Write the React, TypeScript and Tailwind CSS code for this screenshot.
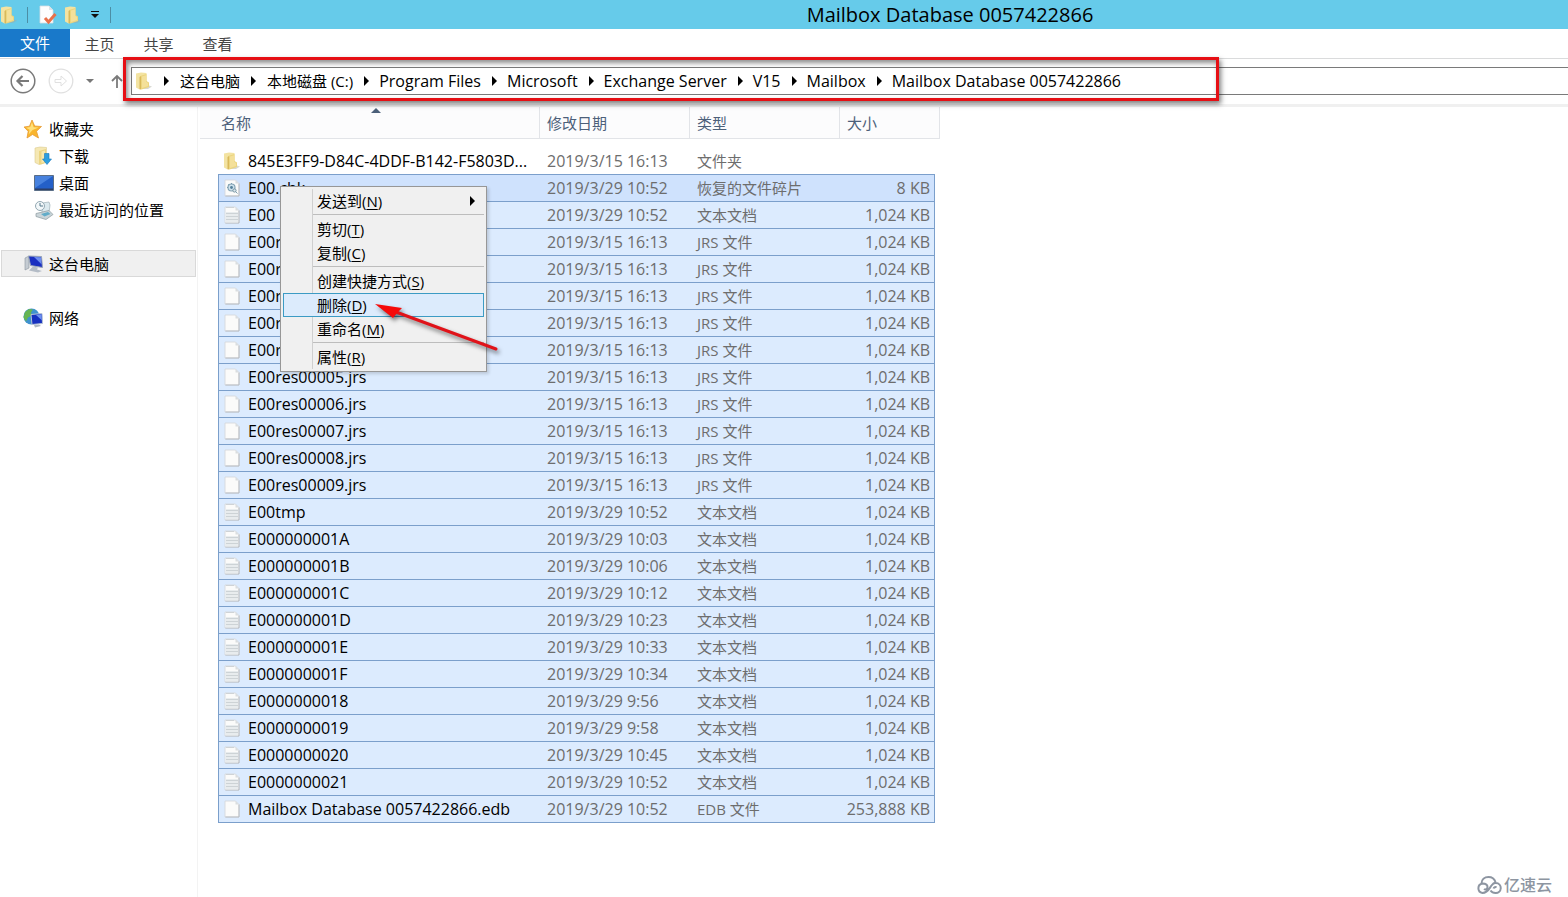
import { useState } from 'react'

type FileKind = 'folder' | 'chk' | 'text' | 'blank'

interface FileEntry {
  name: string
  date: string
  type: string
  size: string
  kind: FileKind
}

const DRIVES = ['这台电脑', '本地磁盘 (C:)']

const FOLDERS = [
  'Program Files',
  'Microsoft',
  'Exchange Server',
  'V15',
  'Mailbox',
  'Mailbox Database 0057422866',
]

const jrs = (name: string): FileEntry => ({
  name,
  date: '2019/3/15 16:13',
  type: 'JRS 文件',
  size: '1,024 KB',
  kind: 'blank',
})

const log = (name: string, time: string): FileEntry => ({
  name,
  date: `2019/3/29 ${time}`,
  type: '文本文档',
  size: '1,024 KB',
  kind: 'text',
})

const FILES: FileEntry[] = [
  { name: '845E3FF9-D84C-4DDF-B142-F5803D...', date: '2019/3/15 16:13', type: '文件夹', size: '', kind: 'folder' },
  { name: 'E00.chk', date: '2019/3/29 10:52', type: '恢复的文件碎片', size: '8 KB', kind: 'chk' },
  log('E00', '10:52'),
  jrs('E00res00000.jrs'),
  jrs('E00res00001.jrs'),
  jrs('E00res00002.jrs'),
  jrs('E00res00003.jrs'),
  jrs('E00res00004.jrs'),
  jrs('E00res00005.jrs'),
  jrs('E00res00006.jrs'),
  jrs('E00res00007.jrs'),
  jrs('E00res00008.jrs'),
  jrs('E00res00009.jrs'),
  log('E00tmp', '10:52'),
  log('E000000001A', '10:03'),
  log('E000000001B', '10:06'),
  log('E000000001C', '10:12'),
  log('E000000001D', '10:23'),
  log('E000000001E', '10:33'),
  log('E000000001F', '10:34'),
  log('E0000000018', '9:56'),
  log('E0000000019', '9:58'),
  log('E0000000020', '10:45'),
  log('E0000000021', '10:52'),
  { name: 'Mailbox Database 0057422866.edb', date: '2019/3/29 10:52', type: 'EDB 文件', size: '253,888 KB', kind: 'blank' },
]

const MENU = [
  [{ label: '发送到', hotkey: 'N', submenu: true }],
  [
    { label: '剪切', hotkey: 'T' },
    { label: '复制', hotkey: 'C' },
  ],
  [
    { label: '创建快捷方式', hotkey: 'S' },
    { label: '删除', hotkey: 'D' },
    { label: '重命名', hotkey: 'M' },
  ],
  [{ label: '属性', hotkey: 'R' }],
]

function FolderIcon() {
  return (
    <svg viewBox="0 0 18 18" className="size-[18px] shrink-0">
      <path d="M11 12.500l6 2-4 2.500H4z" fill="#a9a99c" opacity=".45" />
      <path d="M1 1.500L6 .5l5.500.5v14L4.500 17.500 1 15.500z" fill="#f3e3a2" />
      <path d="M5 4l6.500-2v7l2.500 1.500v4.500l-7.500 2.500-1.500-.5z" fill="#ecd57f" />
      <path d="M4.500 5l1.500-.7v13.200L4.500 17z" fill="#d9b95b" />
      <path d="M7 4.500l4-1.300v6.500l2 1.300v3L7 16z" fill="#f4e09a" />
    </svg>
  )
}

function FileIcon({ kind }: { kind: FileKind }) {
  if (kind === 'folder') return <FolderIcon />
  return (
    <svg viewBox="0 0 18 18" className="size-[18px] shrink-0">
      <path d="M2 1h10.500l3.500 3.500V17H2z" fill="#fbfbfa" stroke="#d3d6d9" strokeWidth=".8" />
      <path d="M16 4.500V17H2.500" fill="none" stroke="#b4b9be" strokeWidth=".9" />
      <path d="M12.500 1v3.500H16z" fill="#d9dde0" />
      {kind === 'text' && (
        <g>
          <path d="M2.500 6h12.500v10.500H2.500z" fill="#e8ecee" />
          <path d="M3.500 1.500h8" stroke="#b5babf" strokeDasharray="1 1" />
          <path d="M3 7.500h12M3 10.500h12M3 13.500h12" stroke="#cdd3d6" />
        </g>
      )}
      {kind === 'chk' && (
        <g fill="none">
          <circle cx="8.500" cy="8.500" r="3.500" fill="#cfe2ec" stroke="#86a5b6" strokeWidth="1.200" />
          <circle cx="8.500" cy="8.500" r="1.400" fill="#55809a" />
          <circle cx="11.500" cy="11.500" r="1.600" fill="#dce8ed" stroke="#7895a3" />
          <path d="M4 8.500h1M8.500 4v1M5.300 5.300l.8.8M12.500 12.500l2 2" stroke="#7c9eb0" />
        </g>
      )}
    </svg>
  )
}

function StarIcon() {
  return (
    <svg viewBox="0 0 20 20" className="size-5 shrink-0">
      <path d="M9 1l2.700 6 6.800.5-5 4.800 2 6.700L9.500 15.500 4 19l1.200-6.700L1 8l5.500-.8z" fill="#f9b52d" stroke="#e79b35" strokeWidth=".8" />
      <path d="M9 3l1.600 5.200 5 .4-6 2.400-4 4.500 1-4.700L3 8.700l4.200-.8z" fill="#ffe07a" />
    </svg>
  )
}

function DownloadIcon() {
  return (
    <svg viewBox="0 0 20 20" className="size-5 shrink-0">
      <path d="M1 2l5-1 6.500.5V16L5 18.500 1 16.500z" fill="#f5e8b4" stroke="#dccb8e" strokeWidth=".6" />
      <path d="M5 5l7-2v6l2 1v6l-7 2.500H5z" fill="#ecd583" />
      <path d="M7.500 5.500L11 4.500V16l-3.500 1z" fill="#f7e9b0" />
      <path d="M10.500 7.500h4.500v5.500h2.500L13 18.500 8.500 13h2z" fill="#2d9fe0" stroke="#1679bd" strokeWidth=".6" />
    </svg>
  )
}

function DesktopIcon() {
  return (
    <svg viewBox="0 0 20 20" className="size-5 shrink-0">
      <path d="M.5 2.500h19v15H.5z" fill="#2460c8" stroke="#5b6e86" />
      <path d="M1 3h18L1 15z" fill="#5c95ea" opacity=".65" />
      <path d="M1 15.500h18V17H1z" fill="#2c3f66" />
    </svg>
  )
}

function RecentIcon() {
  return (
    <svg viewBox="0 0 20 20" className="size-5 shrink-0">
      <path d="M8 3l7-1 1 3-1 8H8z" fill="#dbe9ee" stroke="#a0b0b8" strokeWidth=".7" />
      <path d="M2 13.500l13-3 4 4-7 5-10-3z" fill="#cbd5d9" stroke="#8b999f" strokeWidth=".7" />
      <path d="M7 14l7-2 2.500 2-6 2.500z" fill="#62acc8" />
      <circle cx="6" cy="6" r="4.500" fill="#f2f7f9" stroke="#93a8b2" />
      <path d="M6 3v3h3" fill="none" stroke="#55788a" />
    </svg>
  )
}

function ComputerIcon() {
  return (
    <svg viewBox="0 0 20 20" className="size-5 shrink-0">
      <path d="M1 4l4-2v12l-4 2z" fill="#c4cbd2" stroke="#89939f" strokeWidth=".6" />
      <path d="M4.500 2l13 .5 1 11-12-2z" fill="#1a2fc0" stroke="#9aa6b8" />
      <path d="M10 3l7 .3.5 7z" fill="#6d8ef0" />
      <path d="M9 12.500l5 1-1 2 5 1.500-4 1.500-9-2z" fill="#b4bcc6" />
    </svg>
  )
}

function NetworkIcon() {
  return (
    <svg viewBox="0 0 20 20" className="size-5 shrink-0">
      <circle cx="8.500" cy="8.500" r="8" fill="#3f92cf" />
      <path d="M2 4l4-3 4 .5-2 3 1 3-4 2-2 4-2.500-4z" fill="#66b553" />
      <path d="M8 6.500l11-1 .5 10-10.500 1z" fill="#1630c0" stroke="#b7c4d4" />
      <path d="M13 7l5.500-.7.3 6z" fill="#6e91f0" />
      <path d="M11 17l5-.5 2 1.500-6 1.500z" fill="#aeb8c3" />
    </svg>
  )
}

function RightTriangle() {
  return (
    <svg viewBox="0 0 5 10" className="h-[10px] w-[5px] shrink-0">
      <path d="M0 0l5 5-5 5z" fill="#000" />
    </svg>
  )
}

function TitleBar() {
  return (
    <header className="flex h-[29px] items-center bg-[#66cbea]">
      <FolderIcon />
      <span className="ml-[9px] h-4 w-px bg-[#4c8ea5]" />
      <button type="button" aria-label="属性" className="ml-[10px]">
        <svg viewBox="0 0 20 20" className="size-5">
          <path d="M2 1h9l4 4v13H2z" fill="#fdfdfd" stroke="#d7dde2" strokeWidth=".8" />
          <path d="M11 1v4h4" fill="#dde3e8" />
          <path d="M7 13l3.500 4 7-8" fill="none" stroke="#e8704a" strokeWidth="3" />
        </svg>
      </button>
      <button type="button" aria-label="新建文件夹" className="ml-[6px]">
        <FolderIcon />
      </button>
      <button type="button" aria-label="自定义快速访问工具栏" className="ml-[9px]">
        <svg viewBox="0 0 8 8" className="size-2">
          <path d="M0 .5h8" stroke="#111" />
          <path d="M0 3h8L4 7z" fill="#111" />
        </svg>
      </button>
      <span className="ml-[11px] h-4 w-px bg-[#4c8ea5]" />
      <h1 className="flex-1 pl-[221px] text-center text-[20px] leading-7">
        Mailbox Database 0057422866
      </h1>
    </header>
  )
}

function AddressBar() {
  return (
    <div className="relative flex h-12 items-center border-b-3 border-[#f0f0f0] pb-px pl-[10px]">
      <button type="button" aria-label="后退">
        <svg viewBox="0 0 26 26" className="size-[26px]" fill="none" stroke="#7a7a7a">
          <circle cx="13" cy="13" r="11.800" strokeWidth="1.500" />
          <path d="M19 13H8M12.500 8l-5 5 5 5" strokeWidth="2.200" />
        </svg>
      </button>
      <button type="button" aria-label="前进" className="ml-3">
        <svg viewBox="0 0 26 26" className="size-[26px]" fill="none" stroke="#e0e0e0">
          <circle cx="13" cy="13" r="11.800" strokeWidth="1.300" />
          <path d="M7 11.500h6V8l5.500 5-5.500 5v-3.500H7z" />
        </svg>
      </button>
      <button type="button" aria-label="最近浏览的位置" className="ml-3">
        <svg viewBox="0 0 8 4" className="h-1 w-2">
          <path d="M0 0h8L4 4z" fill="#777" />
        </svg>
      </button>
      <button type="button" aria-label="上移" className="ml-4">
        <svg viewBox="0 0 14 14" className="size-[14px]" fill="none" stroke="#7a7a7a" strokeWidth="1.800">
          <path d="M7 14V2M2 7l5-5 5 5" />
        </svg>
      </button>
      <nav aria-label="地址" className="ml-[7px] flex h-7 flex-1 items-center border-y border-l border-[#7a7a7a] pl-[3px]">
        <FolderIcon />
        {DRIVES.map((name) => (
          <span key={name} className="ml-[11px] flex items-center gap-[11px] whitespace-nowrap">
            <RightTriangle />
            <button type="button">{name}</button>
          </span>
        ))}
        {FOLDERS.map((name) => (
          <span key={name} className="ml-[11px] flex items-center gap-[10px] text-[16px] whitespace-nowrap">
            <RightTriangle />
            <button type="button">{name}</button>
          </span>
        ))}
      </nav>
      {/* Highlight around the path */}
      <div className="pointer-events-none absolute -top-0.5 left-[123px] z-10 h-11 w-[1096px] border-3 border-[#e60f14] shadow-[2px_3px_5px_rgba(0,0,0,0.5),inset_2px_3px_5px_rgba(0,0,0,0.45)]" />
    </div>
  )
}

function Sidebar() {
  return (
    <aside className="w-[198px] shrink-0 border-r border-[#f3f3f3] pt-2">
      <ul>
        <li className="flex h-[27px] items-center gap-[6px] pl-[23px]"><StarIcon />收藏夹</li>
        <li className="flex h-[27px] items-center gap-[5px] pl-[34px]"><DownloadIcon />下载</li>
        <li className="flex h-[27px] items-center gap-[5px] pl-[34px]"><DesktopIcon />桌面</li>
        <li className="flex h-[27px] items-center gap-[5px] pl-[34px]"><RecentIcon />最近访问的位置</li>
      </ul>
      <div className="mt-[27px] mr-px ml-px flex h-[27px] items-center gap-[5px] border border-[#d9d9d9] bg-[#f0f0f0] pl-[22px]">
        <ComputerIcon />这台电脑
      </div>
      <div className="mt-[27px] flex h-[27px] items-center gap-[6px] pl-[23px]">
        <NetworkIcon />网络
      </div>
    </aside>
  )
}

function FileTable() {
  return (
    <table className="w-[740px] table-fixed border-separate border-spacing-0 whitespace-nowrap">
      <colgroup>
        <col className="w-[18px]" />
        <col className="w-[322px]" />
        <col className="w-[150px]" />
        <col className="w-[150px]" />
        <col className="w-[95px]" />
        <col className="w-[5px]" />
      </colgroup>
      <thead>
        <tr className="h-8 bg-[#fcfcfd] text-left text-[#4c607a]">
          <th colSpan={2} className="relative border-r border-b border-[#e2e4e8] pl-[21px] font-normal">
            名称
            <svg viewBox="0 0 10 5" className="absolute top-px left-[171px] h-[5px] w-[10px]">
              <path d="M0 5h10L5 0z" fill="#4c607a" />
            </svg>
          </th>
          <th className="border-r border-b border-[#e2e4e8] pl-[7px] font-normal">修改日期</th>
          <th className="border-r border-b border-[#e2e4e8] pl-[7px] font-normal">类型</th>
          <th colSpan={2} className="border-r border-b border-[#e2e4e8] pl-[7px] font-normal">大小</th>
        </tr>
      </thead>
      <tbody className="text-[#6d6d6d] before:block before:h-2">
        {FILES.map((file, i) => {
          const last = i === FILES.length - 1
          const line = i === 0
            ? 'border-transparent'
            : `border-[#7b9fcb] ${i === 1 ? 'bg-[#cfe2fd]' : 'bg-[#dcebfe]'} ${last ? 'border-b' : ''}`
          return (
            <tr key={file.name} className={last ? 'h-7' : 'h-[27px]'}>
              <td />
              <td className={`border-t border-l pl-1 ${line}`}>
                <div className="flex items-center gap-[7px] text-[16px] text-black">
                  <FileIcon kind={file.kind} />
                  {file.name}
                </div>
              </td>
              <td className={`border-t pl-[7px] text-[16px] ${line}`}>{file.date}</td>
              <td className={`border-t pl-[7px] ${line}`}>{file.type}</td>
              <td className={`border-t border-r pr-1 text-right text-[16px] ${line}`}>{file.size}</td>
              <td />
            </tr>
          )
        })}
      </tbody>
    </table>
  )
}

function ContextMenu() {
  const [active, setActive] = useState('D')

  return (
    <div role="menu" className="absolute top-[79px] left-20 w-[207px] border border-[#979797] bg-[#f0f0f0] p-0.5 shadow-[2px_2px_3px_rgba(0,0,0,0.15)]">
      <div className="absolute inset-y-0.5 left-[31px] w-px bg-[#cfcfcf]" />
      {MENU.map((group, i) => (
        <div key={i}>
          {i > 0 && <div className="ml-[29px] h-1 border-t border-[#f0f0f0]"><div className="h-px bg-[#bdbdbd]" /></div>}
          {group.map((item) => (
            <button
              key={item.hotkey}
              type="button"
              role="menuitem"
              onMouseEnter={() => setActive(item.hotkey)}
              className={`relative flex h-6 w-full items-center border pr-2 pl-[33px] text-left ${
                active === item.hotkey ? 'border-[#3c9bc4] bg-[#dcebfc]' : 'border-transparent'
              }`}
            >
              <span className="flex-1">
                {item.label}(<u className="underline-offset-2">{item.hotkey}</u>)
              </span>
              {'submenu' in item && <RightTriangle />}
            </button>
          ))}
        </div>
      ))}
    </div>
  )
}

function PointerArrow() {
  return (
    <svg viewBox="0 0 130 54" className="pointer-events-none absolute top-[193px] left-[172px] h-[54px] w-[130px] drop-shadow-[2px_3px_2px_rgba(0,0,0,0.5)]">
      <path d="M24 12L124 49" stroke="#e01319" strokeWidth="3" strokeLinecap="round" />
      <path d="M3 4l27 4-5 5-4 5z" fill="#f50a0a" />
    </svg>
  )
}

function Watermark() {
  return (
    <div className="absolute right-4 bottom-0 flex h-6 items-center gap-[2px] text-[16px] font-medium text-[#8d95a1]">
      <svg viewBox="0 0 26 20" className="h-5 w-[26px]" fill="none" stroke="currentColor" strokeWidth="2">
        <path d="M5.500 8.500C5.500 4.500 8.500 2 12.500 2c3.500 0 6 2 7 5" />
        <path d="M8 14c1.500 1 3.500 0 3.500-2 0-2-2-3.500-5-3.500A4.800 4.800 0 0 0 6.500 18c5 0 6.500-4 9-7.500C17 8.500 18.500 7.500 20 8a5 5 0 0 1-.5 10c-2.500 0-4-1-5-2.500M20.500 12.500c-1-.8-2.500-.3-3 1" />
      </svg>
      亿速云
    </div>
  )
}

export default function App() {
  return (
    <div className="relative flex min-h-screen flex-col overflow-hidden bg-white font-['Open_Sans','Noto_Sans_CJK_SC',sans-serif] text-[15px] leading-5 text-black">
      <TitleBar />
      <nav aria-label="功能区" className="flex h-[30px] border-b border-[#dadbdc] text-[#444]">
        <button type="button" className="mb-px w-[70px] bg-[#1979ca] text-white">文件</button>
        <button type="button" className="w-[59px]">主页</button>
        <button type="button" className="w-[59px]">共享</button>
        <button type="button" className="w-[59px]">查看</button>
      </nav>
      <AddressBar />
      <div className="flex flex-1">
        <Sidebar />
        <main className="relative ml-0.5 flex-1">
          <FileTable />
          <ContextMenu />
          <PointerArrow />
        </main>
      </div>
      <Watermark />
    </div>
  )
}
